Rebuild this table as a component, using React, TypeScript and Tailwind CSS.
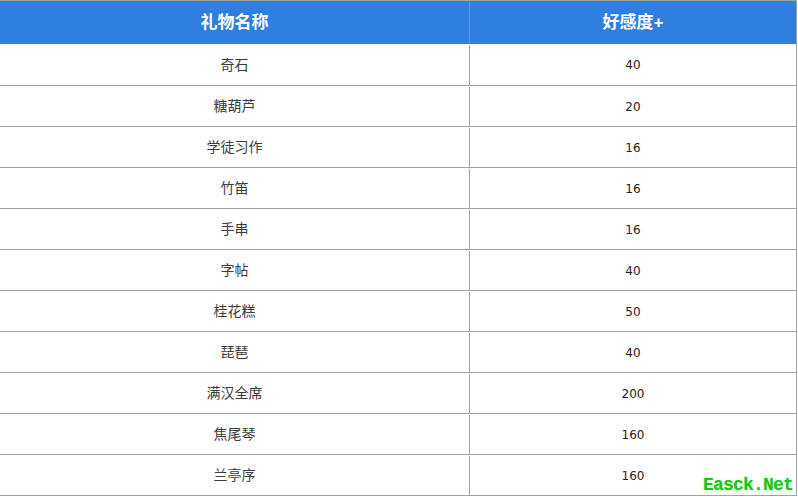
const rows: [string, string][] = [
  ["奇石", "40"],
  ["糖葫芦", "20"],
  ["学徒习作", "16"],
  ["竹笛", "16"],
  ["手串", "16"],
  ["字帖", "40"],
  ["桂花糕", "50"],
  ["琵琶", "40"],
  ["满汉全席", "200"],
  ["焦尾琴", "160"],
  ["兰亭序", "160"],
];

export default function App() {
  return (
    <div className="relative w-[798px] h-[497px] bg-white overflow-hidden font-['Liberation_Sans','Noto_Sans_CJK_SC',sans-serif]">
      <div className="w-[797px] border-t border-r border-b border-[#a3a3a3]">
        {/* header */}
        <div className="grid grid-cols-[470px_1fr] h-[43px] bg-[#2f7fe0] text-white text-[17px] font-bold">
          <div className="flex items-center justify-center border-r border-[#5f9be6]">礼物名称</div>
          <div className="flex items-center justify-center">好感度+</div>
        </div>
        {rows.map(([name, val], i) => (
          <div
            key={name}
            className={`grid grid-cols-[470px_1fr] h-[41px] pt-px ${i === 0 ? "" : "border-t border-[#a3a3a3]"}`}
          >
            <div className="flex items-center justify-center border-r border-[#a3a3a3] text-[14px] text-[#3c3c3c]">{name}</div>
            <div className="flex items-center justify-center text-[12px] text-[#222] font-['DejaVu_Sans',sans-serif]">{val}</div>
          </div>
        ))}
      </div>
      {/* watermark */}
      <div className="absolute left-[703px] top-[472px] text-[18px] font-bold text-[#17c417] font-['Liberation_Mono',monospace] tracking-[-0.8px] [text-shadow:0_0_2px_#b8ffb0,0_0_3px_#d8ffd0]">
        Easck.Net
      </div>
    </div>
  );
}
